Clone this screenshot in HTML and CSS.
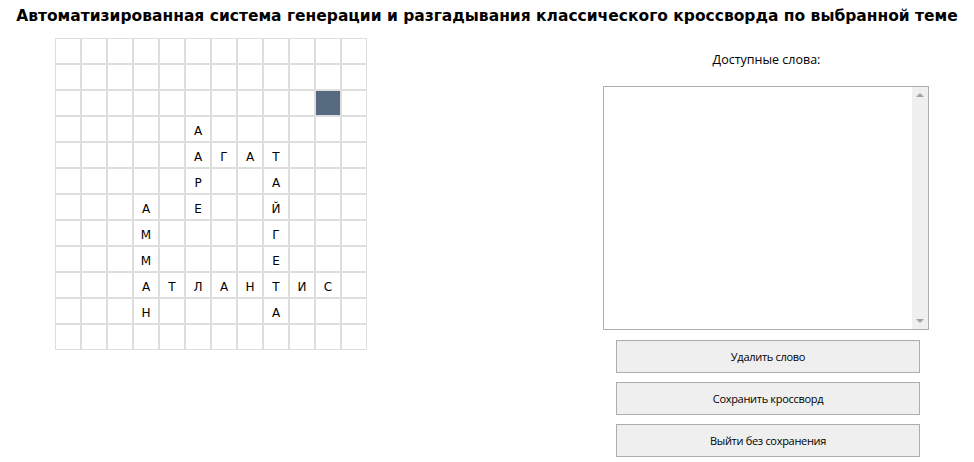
FILE: index.html
```html
<!DOCTYPE html>
<html lang="ru">
<head>
<meta charset="utf-8">
<title>Кроссворд</title>
<link rel="stylesheet" href="styles.css">
</head>
<body>
<h1 class="title">Автоматизированная система генерации и разгадывания классического кроссворда по выбранной теме</h1>
<div class="main">
  <div class="grid">
    <span class="c"></span><span class="c"></span><span class="c"></span><span class="c"></span><span class="c"></span><span class="c"></span><span class="c"></span><span class="c"></span><span class="c"></span><span class="c"></span><span class="c"></span><span class="c"></span>
    <span class="c"></span><span class="c"></span><span class="c"></span><span class="c"></span><span class="c"></span><span class="c"></span><span class="c"></span><span class="c"></span><span class="c"></span><span class="c"></span><span class="c"></span><span class="c"></span>
    <span class="c"></span><span class="c"></span><span class="c"></span><span class="c"></span><span class="c"></span><span class="c"></span><span class="c"></span><span class="c"></span><span class="c"></span><span class="c"></span><span class="c filled"></span><span class="c"></span>
    <span class="c"></span><span class="c"></span><span class="c"></span><span class="c"></span><span class="c"></span><span class="c">А</span><span class="c"></span><span class="c"></span><span class="c"></span><span class="c"></span><span class="c"></span><span class="c"></span>
    <span class="c"></span><span class="c"></span><span class="c"></span><span class="c"></span><span class="c"></span><span class="c">А</span><span class="c">Г</span><span class="c">А</span><span class="c">Т</span><span class="c"></span><span class="c"></span><span class="c"></span>
    <span class="c"></span><span class="c"></span><span class="c"></span><span class="c"></span><span class="c"></span><span class="c">Р</span><span class="c"></span><span class="c"></span><span class="c">А</span><span class="c"></span><span class="c"></span><span class="c"></span>
    <span class="c"></span><span class="c"></span><span class="c"></span><span class="c">А</span><span class="c"></span><span class="c">Е</span><span class="c"></span><span class="c"></span><span class="c">Й</span><span class="c"></span><span class="c"></span><span class="c"></span>
    <span class="c"></span><span class="c"></span><span class="c"></span><span class="c">М</span><span class="c"></span><span class="c"></span><span class="c"></span><span class="c"></span><span class="c">Г</span><span class="c"></span><span class="c"></span><span class="c"></span>
    <span class="c"></span><span class="c"></span><span class="c"></span><span class="c">М</span><span class="c"></span><span class="c"></span><span class="c"></span><span class="c"></span><span class="c">Е</span><span class="c"></span><span class="c"></span><span class="c"></span>
    <span class="c"></span><span class="c"></span><span class="c"></span><span class="c">А</span><span class="c">Т</span><span class="c">Л</span><span class="c">А</span><span class="c">Н</span><span class="c">Т</span><span class="c">И</span><span class="c">С</span><span class="c"></span>
    <span class="c"></span><span class="c"></span><span class="c"></span><span class="c">Н</span><span class="c"></span><span class="c"></span><span class="c"></span><span class="c"></span><span class="c">А</span><span class="c"></span><span class="c"></span><span class="c"></span>
    <span class="c"></span><span class="c"></span><span class="c"></span><span class="c"></span><span class="c"></span><span class="c"></span><span class="c"></span><span class="c"></span><span class="c"></span><span class="c"></span><span class="c"></span><span class="c"></span>
  </div>
  <div class="side">
    <div class="label">Доступные слова:</div>
    <div class="listbox">
      <div class="list-area"></div>
      <div class="scrollbar">
        <span class="arrow up"></span>
        <span class="arrow down"></span>
      </div>
    </div>
    <button class="btn">Удалить слово</button>
    <button class="btn">Сохранить кроссворд</button>
    <button class="btn">Выйти без сохранения</button>
  </div>
</div>
</body>
</html>
```
FILE: styles.css
```css
html, body {
  margin: 0;
  padding: 0;
  background: #ffffff;
}

body {
  width: 974px;
  height: 462px;
  overflow: hidden;
  font-family: "Open Sans", "Noto Sans", sans-serif;
  color: #000;
}

.title {
  margin: 0;
  padding-top: 6px;
  font-family: "DejaVu Sans", sans-serif;
  font-weight: bold;
  font-size: 15.5px;
  line-height: 20px;
  text-align: center;
  white-space: nowrap;
  color: #000;
}

.main {
  display: flex;
  align-items: flex-start;
  margin-top: 12px;
  padding-left: 55px;
  gap: 236px;
}

.grid {
  display: grid;
  grid-template-columns: repeat(12, 26px);
  grid-auto-rows: 26px;
}

.c {
  box-sizing: border-box;
  border: 1px solid #dedede;
  display: flex;
  align-items: center;
  justify-content: center;
  padding-top: 3px;
  font-family: "DejaVu Sans", sans-serif;
  font-size: 12px;
  color: #000;
}

.c.filled {
  background: #566a80;
  background-clip: padding-box;
}

.side {
  width: 326px;
  display: flex;
  flex-direction: column;
}

.label {
  margin-top: 14px;
  font-size: 12.5px;
  line-height: 16px;
  text-align: center;
  padding-left: 1px;
}

.listbox {
  box-sizing: border-box;
  margin-top: 18px;
  height: 244px;
  border: 1px solid #acacac;
  display: flex;
  background: #fff;
}

.list-area {
  flex: 1;
}

.scrollbar {
  width: 16px;
  background: #f0f0f0;
  display: flex;
  flex-direction: column;
  justify-content: space-between;
  align-items: center;
  padding: 6px 0;
}

.arrow {
  width: 0;
  height: 0;
  border-left: 4px solid transparent;
  border-right: 4px solid transparent;
}

.arrow.up {
  border-bottom: 4px solid #a3a3a3;
}

.arrow.down {
  border-top: 4px solid #a3a3a3;
}

.btn {
  box-sizing: border-box;
  align-self: flex-start;
  margin-left: 13px;
  margin-top: 10px;
  width: 304px;
  height: 33px;
  background: #efefef;
  border: 1px solid #adadad;
  border-radius: 0;
  font-family: "Open Sans", "Noto Sans", sans-serif;
  font-size: 11px;
  letter-spacing: -0.3px;
  color: #000;
  padding: 0;
}

.btn + .btn {
  margin-top: 9px;
}
```
